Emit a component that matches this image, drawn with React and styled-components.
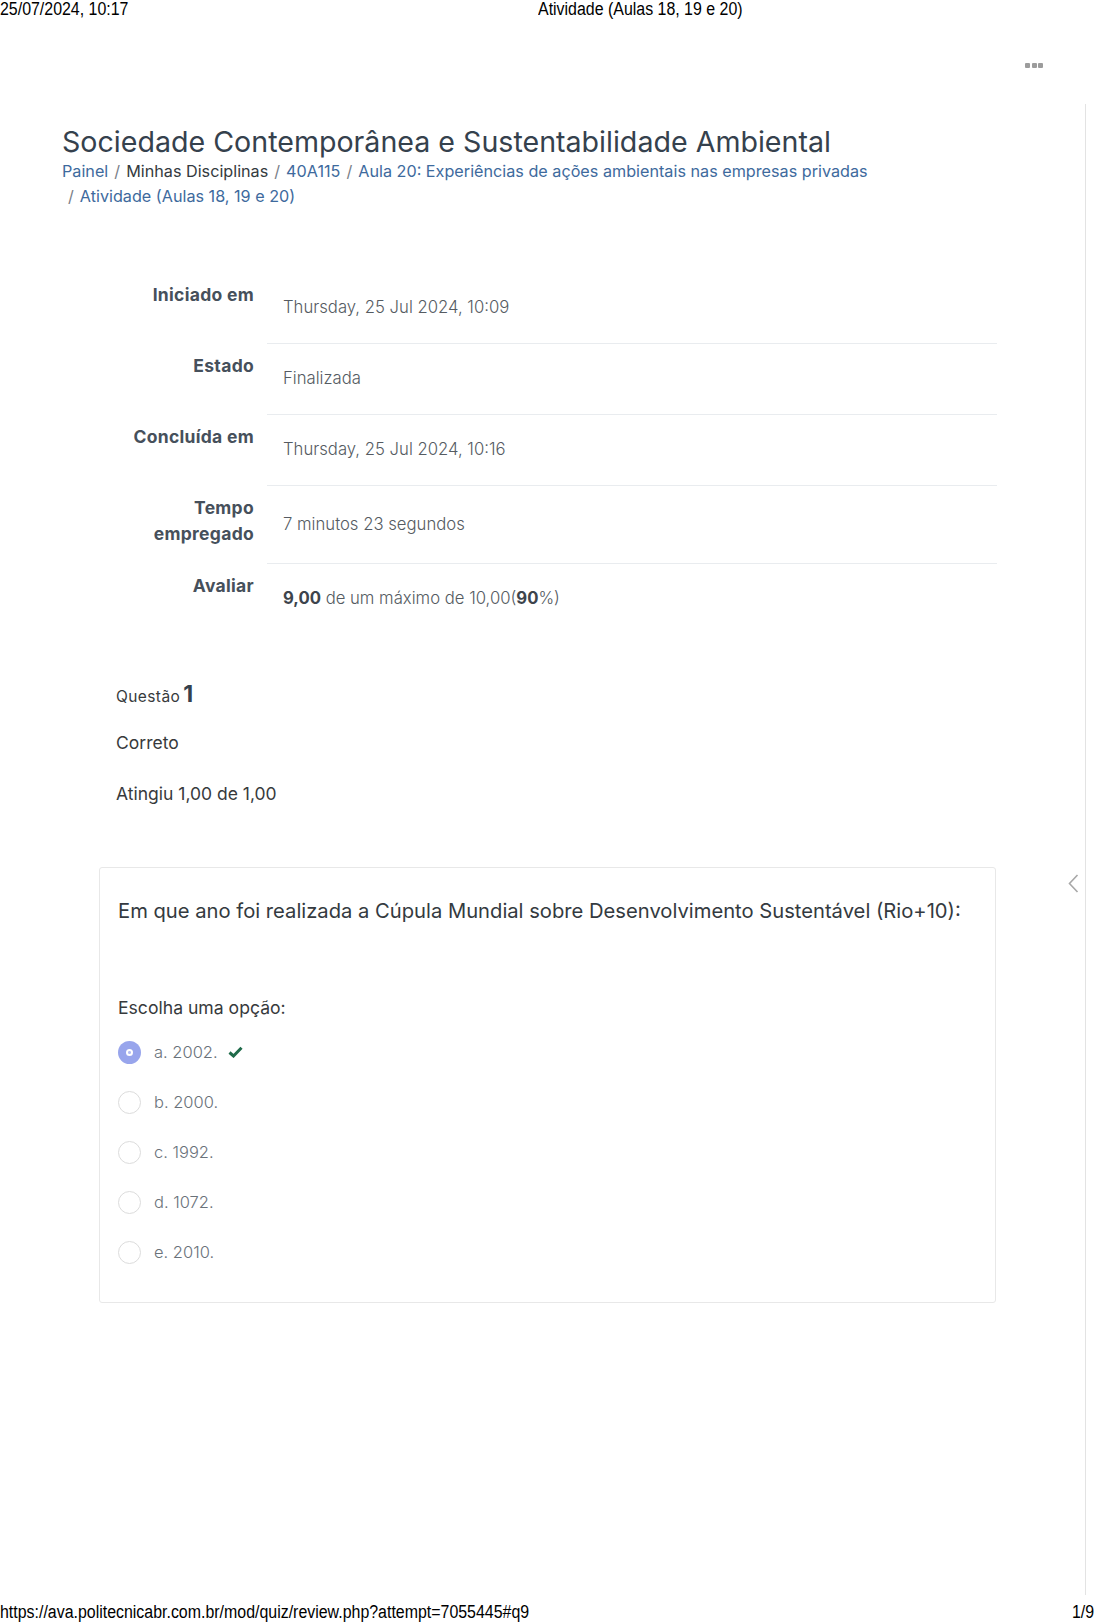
import React from 'react';
import styled, { createGlobalStyle } from 'styled-components';

const GlobalStyle = createGlobalStyle`
  *, *::before, *::after { box-sizing: border-box; }
  html, body { margin: 0; padding: 0; background: #ffffff; }
  body { font-family: 'Inter', 'Noto Sans', sans-serif; }
`;

const summary = [
  { label: ['Iniciado em'], value: 'Thursday, 25 Jul 2024, 10:09' },
  { label: ['Estado'], value: 'Finalizada' },
  { label: ['Concluída em'], value: 'Thursday, 25 Jul 2024, 10:16' },
  { label: ['Tempo', 'empregado'], value: '7 minutos 23 segundos' },
  { label: ['Avaliar'], grade: true },
];

const options = [
  { text: 'a. 2002.', checked: true },
  { text: 'b. 2000.' },
  { text: 'c. 1992.' },
  { text: 'd. 1072.' },
  { text: 'e. 2010.' },
];

const App = () => {
  return (
    <Page>
      <GlobalStyle />
      <PrintHeader>
        <PrintText>25/07/2024, 10:17</PrintText>
        <PrintText>Atividade (Aulas 18, 19 e 20)</PrintText>
      </PrintHeader>

      <Topbar>
        <Dots>
          <i />
          <i />
          <i />
        </Dots>
      </Topbar>

      <Body>
        <Content>
          <Title>Sociedade Contemporânea e Sustentabilidade Ambiental</Title>
          <Breadcrumb>
            <Crumb $link>Painel</Crumb>
            <Crumb>Minhas Disciplinas</Crumb>
            <Crumb $link>40A115</Crumb>
            <Crumb $link>Aula 20: Experiências de ações ambientais nas empresas privadas</Crumb>
            <Crumb $link>Atividade (Aulas 18, 19 e 20)</Crumb>
          </Breadcrumb>

          <Summary>
            {summary.map((row, i) => (
              <React.Fragment key={i}>
                <Label>
                  {row.label.map((l) => (
                    <div key={l}>{l}</div>
                  ))}
                </Label>
                <Value $first={i === 0}>
                  {row.grade ? (
                    <span>
                      <b>9,00</b> de um máximo de 10,00(<b>90</b>%)
                    </span>
                  ) : (
                    row.value
                  )}
                </Value>
              </React.Fragment>
            ))}
          </Summary>

          <QuestionInfo>
            <QNumber>
              Questão <strong>1</strong>
            </QNumber>
            <QState>Correto</QState>
            <QGrade>Atingiu 1,00 de 1,00</QGrade>
          </QuestionInfo>

          <Card>
            <QText>
              Em que ano foi realizada a Cúpula Mundial sobre Desenvolvimento Sustentável (Rio+10):
            </QText>
            <Prompt>Escolha uma opção:</Prompt>
            <Answers>
              {options.map((o) => (
                <Option key={o.text}>
                  <Radio $checked={o.checked} />
                  <OptionText>{o.text}</OptionText>
                  {o.checked && (
                    <svg width="15" height="12" viewBox="0 0 15 12">
                      <path d="M1.5 6.5 L5.5 10 L13.5 1.8" fill="none" stroke="#1f6b4a" strokeWidth="3" />
                    </svg>
                  )}
                </Option>
              ))}
            </Answers>
          </Card>
        </Content>
        <Rail />
        <DrawerToggle>
          <svg width="11" height="19" viewBox="0 0 11 19">
            <path d="M9.5 1 L1.5 9.5 L9.5 18" fill="none" stroke="#a8a8a8" strokeWidth="1.6" />
          </svg>
        </DrawerToggle>
      </Body>

      <PrintFooter>
        <PrintText>https://ava.politecnicabr.com.br/mod/quiz/review.php?attempt=7055445#q9</PrintText>
        <PrintText $right>1/9</PrintText>
      </PrintFooter>
    </Page>
  );
};

// Styled components
const Page = styled.div`
  width: 1094px;
  height: 1623px;
  display: flex;
  flex-direction: column;
  overflow: hidden;
`;

const PrintHeader = styled.div`
  display: grid;
  grid-template-columns: 538px auto;
  height: 17px;
  padding-top: 1px;
  font-family: 'Liberation Sans', Arial, sans-serif;
  font-size: 18px;
  line-height: 16px;
  color: #000;
`;

const PrintText = styled.span`
  display: inline-block;
  white-space: nowrap;
  transform: scaleX(0.885);
  transform-origin: ${(p) => (p.$right ? 'right' : 'left')} center;
`;

const Topbar = styled.div`
  height: 87px;
  display: flex;
  justify-content: flex-end;
  padding: 46px 51px 0 0;
`;

const Dots = styled.div`
  display: flex;
  gap: 1.5px;
  height: 5px;

  i {
    width: 5px;
    height: 5px;
    border-radius: 1px;
    background: #9c9c9c;
  }
`;

const Body = styled.div`
  position: relative;
  flex: 1;
  display: flex;
`;

const Content = styled.div`
  width: 1086px;
  border-right: 1px solid #e3e3e3;
  padding: 20px 0 0 62px;
`;

const Rail = styled.div`
  flex: 1;
`;

const DrawerToggle = styled.div`
  position: absolute;
  left: 1068px;
  top: 770px;
  display: flex;
`;

const Title = styled.h1`
  margin: 0;
  font-size: 28.6px;
  font-weight: 400;
  line-height: 35px;
  color: #35414d;
`;

const Breadcrumb = styled.div`
  display: flex;
  flex-wrap: wrap;
  width: 962px;
  font-size: 16.2px;
  line-height: 25px;
`;

const Crumb = styled.span`
  color: ${(p) => (p.$link ? '#3e6a9d' : '#343a40')};

  &:not(:first-child)::before {
    content: '/';
    color: #7a8088;
    padding: 0 6px;
  }
`;

const Summary = styled.div`
  display: grid;
  grid-template-columns: 205px 730px;
  margin-top: 63px;
`;

const Label = styled.div`
  text-align: right;
  padding: 10px 13px 16px 0;
  font-size: 17.5px;
  font-weight: 700;
  letter-spacing: 0.3px;
  line-height: 26px;
  color: #46505b;
`;

const Value = styled.div`
  display: flex;
  align-items: center;
  min-height: 71px;
  padding: 0 16px 2px;
  border-top: ${(p) => (p.$first ? 'none' : '1px solid #e9ecef')};
  font-size: 16.7px;
  font-weight: 300;
  color: #555b62;

  b {
    font-weight: 700;
    color: #3d444c;
  }
`;

const QuestionInfo = styled.div`
  margin: 45px 0 0 54px;
  color: #373a3c;
`;

const QNumber = styled.div`
  height: 30px;
  display: flex;
  align-items: baseline;
  gap: 3px;
  font-size: 15.5px;
  letter-spacing: 0.4px;
  line-height: 30px;

  strong {
    font-size: 23px;
    font-weight: 700;
    color: #35414d;
  }
`;

const QState = styled.div`
  margin-top: 22px;
  font-size: 17.5px;
  line-height: 24px;
`;

const QGrade = styled.div`
  margin-top: 27px;
  font-size: 17.5px;
  line-height: 24px;
`;

const Card = styled.div`
  width: 897px;
  margin: 61px 0 0 37px;
  border: 1px solid #e8e8e8;
  border-radius: 3px;
  padding: 29px 18px 25px;
`;

const QText = styled.div`
  font-size: 20.2px;
  line-height: 28px;
  color: #343a40;
`;

const Prompt = styled.div`
  margin-top: 71px;
  font-size: 17.6px;
  line-height: 24px;
  color: #373a3c;
`;

const Answers = styled.div`
  margin-top: 7px;
  display: flex;
  flex-direction: column;
`;

const Option = styled.div`
  height: 50px;
  display: flex;
  align-items: center;

  svg {
    margin-left: 10px;
  }
`;

const Radio = styled.span`
  width: 23px;
  height: 23px;
  border-radius: 50%;
  flex-shrink: 0;
  display: flex;
  align-items: center;
  justify-content: center;
  border: ${(p) => (p.$checked ? 'none' : '1.5px solid #dcdcdc')};
  background: ${(p) => (p.$checked ? '#98a5ec' : '#fff')};

  &::after {
    content: '';
    display: ${(p) => (p.$checked ? 'block' : 'none')};
    width: 7px;
    height: 7px;
    border-radius: 50%;
    background: radial-gradient(circle, #b5bef2 0 1.3px, #ffffff 1.6px);
  }
`;

const OptionText = styled.span`
  margin-left: 13px;
  font-size: 16.5px;
  font-weight: 300;
  color: #6a727a;
`;

const PrintFooter = styled.div`
  height: 28px;
  padding-top: 9px;
  display: flex;
  justify-content: space-between;
  font-family: 'Liberation Sans', Arial, sans-serif;
  font-size: 18px;
  line-height: 16px;
  color: #000;
`;

export default App;
